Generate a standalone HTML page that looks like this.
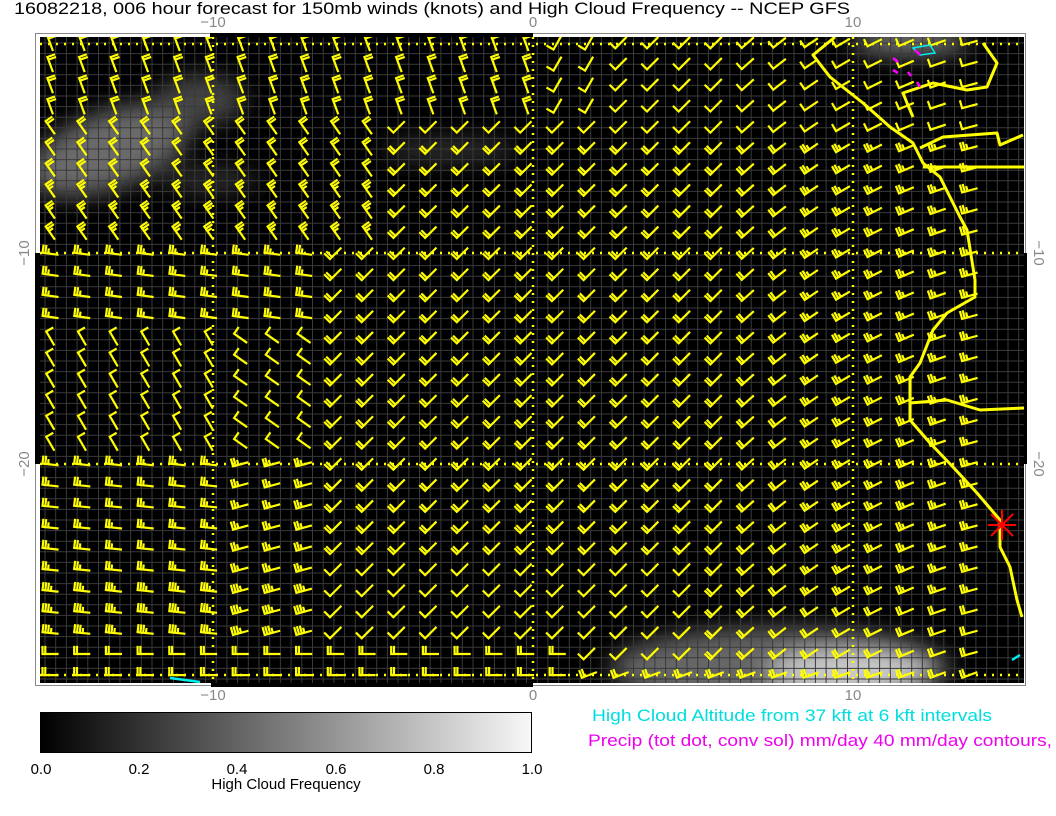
<!DOCTYPE html>
<html><head><meta charset="utf-8"><style>
html,body{margin:0;padding:0;background:#fff;width:1056px;height:816px;overflow:hidden;font-family:"Liberation Sans",sans-serif}
svg{position:absolute;left:0;top:0}
</style></head><body>
<svg width="1056" height="816" viewBox="0 0 1056 816" xmlns="http://www.w3.org/2000/svg">
<defs>
<filter id="bl" x="-50%" y="-50%" width="200%" height="200%"><feGaussianBlur stdDeviation="12"/></filter>
<linearGradient id="cb" x1="0" x2="1" y1="0" y2="0"><stop offset="0" stop-color="#000"/><stop offset="1" stop-color="#f8f8f8"/></linearGradient>
<clipPath id="mc"><rect x="40" y="37" width="984" height="646"/></clipPath>
</defs>
<text x="14" y="14" font-size="17" fill="#000" textLength="836" lengthAdjust="spacingAndGlyphs">16082218, 006 hour forecast for 150mb winds (knots) and High Cloud Frequency -- NCEP GFS</text>
<rect x="35.5" y="33.5" width="990" height="652" fill="#fff" stroke="#888" stroke-width="1"/>
<rect x="40" y="37" width="984" height="646" fill="#000"/>
<rect x="210" y="33" width="323" height="4" fill="#000"/>
<rect x="211" y="683" width="322" height="4" fill="#000"/>
<rect x="35" y="253" width="5" height="211" fill="#000"/>
<rect x="1024" y="253" width="3" height="211" fill="#000"/>
<g clip-path="url(#mc)">
<g filter="url(#bl)" fill="#555">
<ellipse cx="110" cy="150" rx="85" ry="38" transform="rotate(-20 110 150)" fill="#6a6a6a"/>
<ellipse cx="200" cy="100" rx="45" ry="25" fill="#444"/>
<ellipse cx="210" cy="180" rx="50" ry="12" fill="#333"/>
<ellipse cx="450" cy="150" rx="70" ry="12" fill="#333"/>
<ellipse cx="910" cy="42" rx="60" ry="12" fill="#888"/>
<ellipse cx="780" cy="668" rx="170" ry="40" fill="#666"/>
<ellipse cx="850" cy="672" rx="80" ry="22" fill="#ccc"/>
</g>
<g id="grid" stroke="#3a3a3a" stroke-width="1"></g>
<g stroke="#ff0" stroke-width="2.5" stroke-dasharray="2,6">
<line x1="40" y1="44" x2="1024" y2="44"/><line x1="40" y1="253" x2="1024" y2="253"/>
<line x1="40" y1="464" x2="1024" y2="464"/><line x1="40" y1="675" x2="1024" y2="675"/>
<line x1="213" y1="37" x2="213" y2="683"/><line x1="533" y1="37" x2="533" y2="683"/><line x1="853" y1="37" x2="853" y2="683"/>
</g>
<g id="barbs" stroke="#ff0" stroke-width="2.2" fill="none" stroke-linecap="square"></g>
<g stroke="#ff0" stroke-width="3" fill="none" stroke-linejoin="round">
<path d="M835 37 L813 55 L830 77 L863 103 L890 127 L913 143 L923 163 L940 177 L960 217 L967 230 L975 280 L975 297 L947 313 L933 330 L920 363 L910 377 L910 420 L930 443 L953 467 L977 493 L1000 520 L1000 547 L1010 567 L1017 600 L1022 617"/>
<path d="M923 167 L1024 167"/>
<path d="M920 148 L943 137 L997 133 L1000 145 L1023 135"/>
<path d="M913 117 L907 103 L903 93 L933 83 L967 90 L987 87 L997 63 L983 43"/>
<path d="M910 403 L947 400 L980 410 L1024 408"/>
</g>
<path d="M1012 660 L1020 655 M170 678 L200 682" stroke="#0ee" stroke-width="2.5" fill="none"/>
<path d="M913 48 L920 55 L935 53 L930 45 Z" stroke="#0ee" stroke-width="1.5" fill="none"/>
<path d="M915 50 L920 55 M893 58 L898 62 M893 70 L898 73 M908 72 L911 76 M917 82 L920 87" stroke="#f0f" stroke-width="2.5"/>
</g>
<g stroke="#f00" stroke-width="2"><line x1="988" y1="525" x2="1016" y2="525"/><line x1="1002" y1="510" x2="1002" y2="540"/><line x1="991" y1="514" x2="1013" y2="536"/><line x1="991" y1="536" x2="1013" y2="514"/></g>
<g font-size="15" fill="#888" text-anchor="middle">
<text x="213" y="27">−10</text><text x="533" y="27">0</text><text x="853" y="27">10</text>
<text x="213" y="700">−10</text><text x="533" y="700">0</text><text x="853" y="700">10</text>
<text transform="translate(29 253) rotate(-90)">−10</text><text transform="translate(29 464) rotate(-90)">−20</text>
<text transform="translate(1034 253) rotate(90)">−10</text><text transform="translate(1034 464) rotate(90)">−20</text>
</g>
<rect x="40.5" y="712.5" width="491" height="40" fill="url(#cb)" stroke="#000"/>
<g font-size="15" fill="#000" text-anchor="middle">
<text x="41" y="774">0.0</text><text x="139" y="774">0.2</text><text x="237" y="774">0.4</text><text x="336" y="774">0.6</text><text x="434" y="774">0.8</text><text x="532" y="774">1.0</text>
<text x="286" y="789">High Cloud Frequency</text>
</g>
<text x="592" y="721" font-size="17" fill="#0dd" textLength="400" lengthAdjust="spacingAndGlyphs">High Cloud Altitude from 37 kft at 6 kft intervals</text>
<text x="588" y="746" font-size="17" fill="#e0e" textLength="464" lengthAdjust="spacingAndGlyphs">Precip (tot dot, conv sol) mm/day 40 mm/day contours,</text>
</svg>
<script>
var ns="http://www.w3.org/2000/svg";
var g=document.getElementById('grid'),s='';
for(var x=45;x<1024;x+=10.7)s+='<line x1="'+x+'" y1="37" x2="'+x+'" y2="683"/>';
for(var y=43;y<683;y+=10.6)s+='<line x1="40" y1="'+y+'" x2="1024" y2="'+y+'"/>';
g.innerHTML=s;
function bound(y){if(y<120)return 540;if(y<250)return 390;if(y<460)return 320;if(y<650)return 330;return 560;}
var p='';
function barb(cx,cy,phi,n){var r=phi*Math.PI/180,ux=Math.cos(r),uy=Math.sin(r),vx=uy,vy=-ux;
var S=15,tx=cx-S/2*ux,ty=cy-S/2*uy;
p+='M'+tx.toFixed(1)+' '+ty.toFixed(1)+'L'+(tx+S*ux).toFixed(1)+' '+(ty+S*uy).toFixed(1);
for(var k=0;k<n;k++){var bx=tx+ux*k*2.8,by=ty+uy*k*2.8,L=(k==n-1&&n>2)?4:7;
p+='M'+bx.toFixed(1)+' '+by.toFixed(1)+'L'+(bx+vx*L).toFixed(1)+' '+(by+vy*L).toFixed(1);}}
for(var j=0;j<31;j++){var y=43+j*21.07;
for(var i=0;i<31;i++){var x=50+i*31.7;if(x>990)continue;
if(x>bound(y)){var phi=x<720?-45:(-45+(x-720)*0.12);var n=1;
if(y>130&&y<560)n=x>780?3:2;if(y>560)n=x>700?2:1;if(y>250&&y<600&&x>780)n=3;if(y<110&&x<600){phi=-60;n=1;}
if(j==30){phi=-20;n=2;}
barb(x,y,phi,n);}
else{var phi,n;
if(y<110){phi=70;n=2;}else if(y<240){phi=55;n=2+(y>180?1:0);}
else if(y<330){phi=8;n=3;}else if(y<460){phi=60-(x>220?25:0);n=1;}
else if(y<650){phi=x>220?-15:6;n=(y>580)?4:3;}else{phi=0;n=2;}
barb(x,y,phi,n);}}}
var pa=document.createElementNS(ns,'path');pa.setAttribute('d',p);document.getElementById('barbs').appendChild(pa);
</script>
</body></html>
